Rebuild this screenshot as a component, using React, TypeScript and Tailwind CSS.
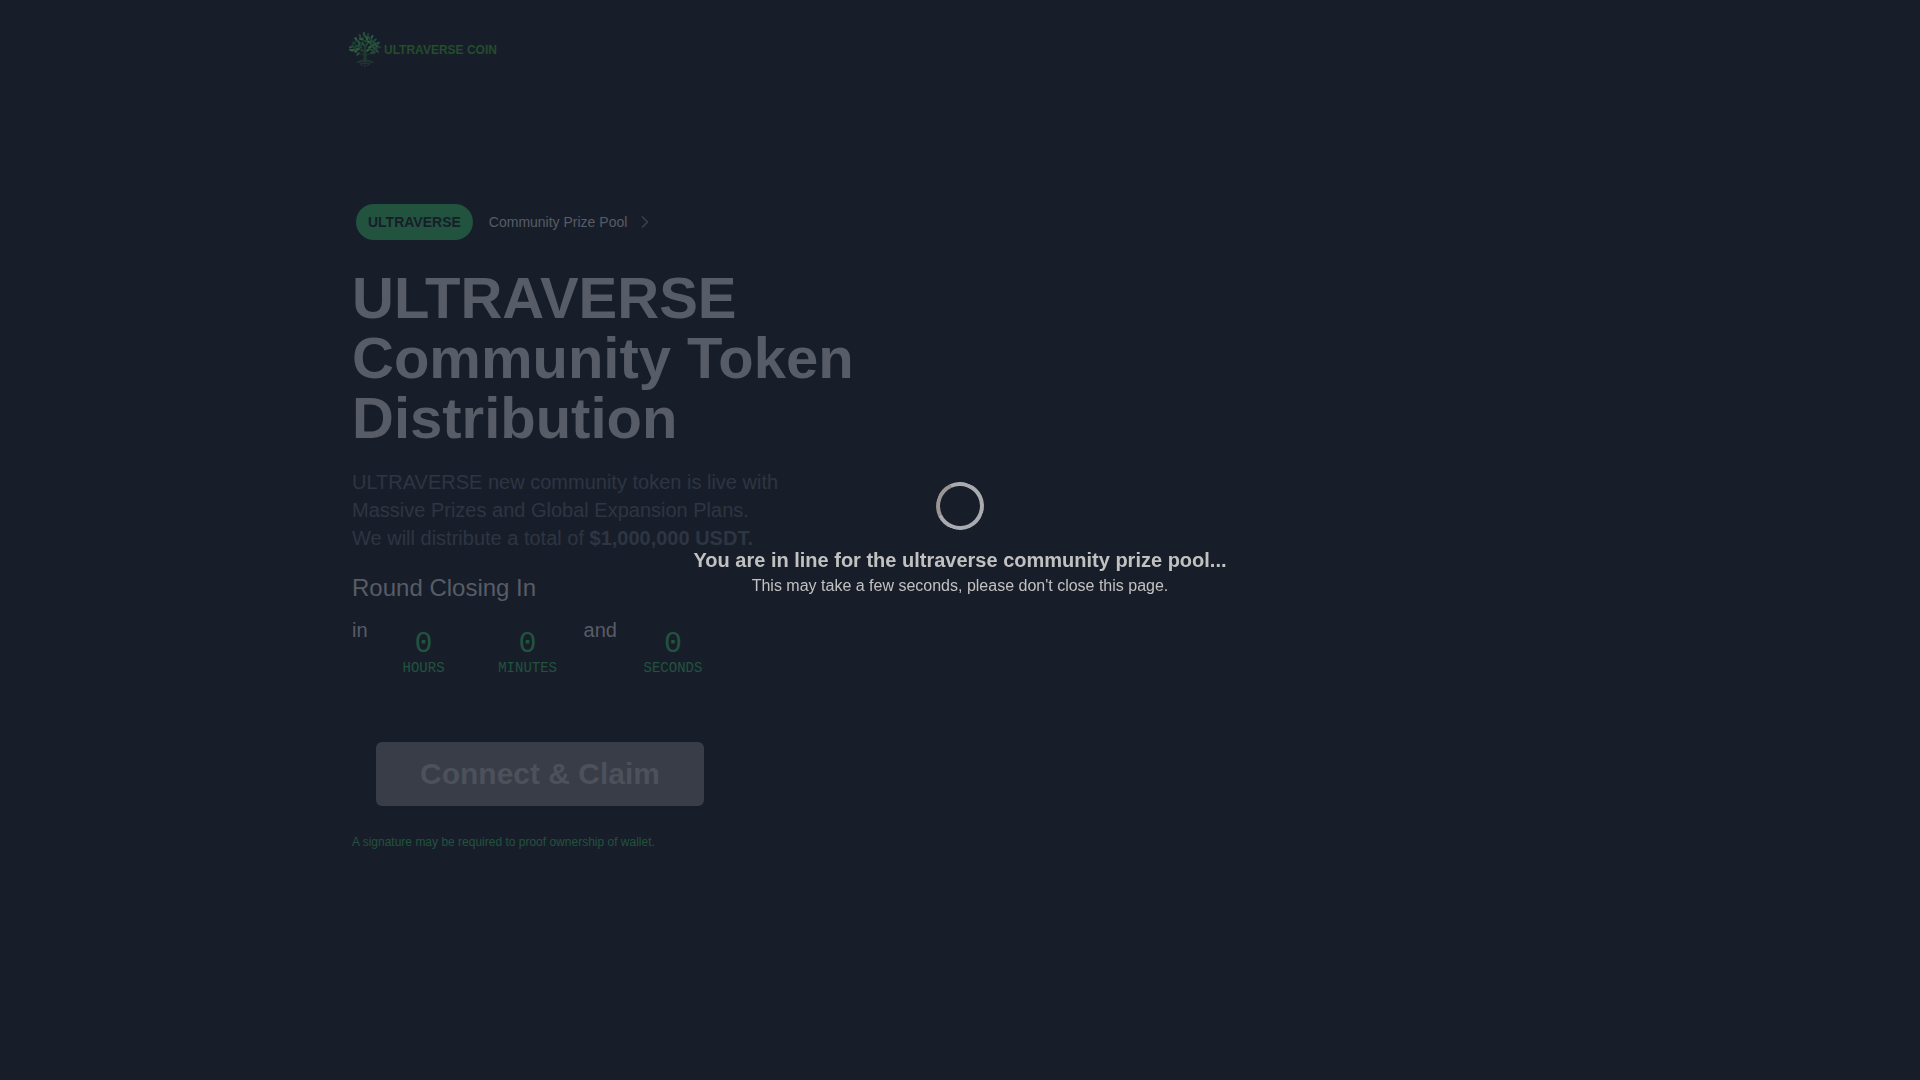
import { ChevronRight } from "lucide-react";

const sans = "font-['Liberation_Sans',Arial,sans-serif]";

const leafColors = ["#26513a", "#1f4032", "#2b5f3d", "#21483a"];

// [x, y, rotation] of each leaf in the logo's 34 x 36 canvas
const leaves: [number, number, number][] = [
  [3, 15, -10], [6, 11, 30], [8, 7, 50], [12, 4, 70], [16, 2, 90], [20, 3, 100],
  [24, 5, 120], [27, 8, 140], [30, 11, 160], [31, 15, 10], [5, 18, -30], [9, 14, 20],
  [11, 10, 45], [15, 7, 80], [19, 7, 95], [23, 9, 130], [25, 13, 150], [28, 16, 10],
  [8, 19, -30], [12, 15, 20], [15, 12, 60], [19, 12, 110], [22, 15, 150], [24, 18, 20],
  [10, 22, -40], [14, 18, 40], [20, 18, 140], [26, 20, 30], [29, 19, 40], [5, 14, 60],
  [13, 7, 10], [21, 6, 60], [27, 12, 80], [17, 9, 20], [3, 18, 20], [9, 9, 20],
  [11, 12, 80], [17, 14, 90], [21, 10, 30], [25, 10, 60], [29, 14, 120], [7, 16, 60],
  [10, 17, 0], [23, 12, 90], [26, 16, 60], [13, 13, 120], [18, 5, 40], [24, 21, 20],
];

function TreeLogo() {
  return (
    <svg className="h-9 w-[34px] shrink-0" viewBox="0 0 34 36" aria-hidden="true">
      <g fill="none" stroke="#20382f" strokeLinecap="round">
        <path d="M17 28V17" strokeWidth="3" />
        <path d="M17 21C14 19 11 18 8 15M17 20C20 18 23 17 27 13M17 18L14 9M17 18L21 8M16 23C13 22 10 22 7 19M18 23C21 22 24 22 27 19" strokeWidth="1" />
        <path d="M17 27C14 29 11 28 9 31M17 27C15 30 13 31 13 33M17 27V35M17 27C19 30 21 31 21 33M17 27C20 29 23 28 25 31M10 30C12 31 14 32 15 34M24 30C22 31 20 32 19 34M9 30C12 29 22 29 25 30M13 32C15 31 19 31 21 32" strokeWidth="1" />
      </g>
      {leaves.map(([x, y, r], i) => (
        <ellipse
          key={i}
          cx={x}
          cy={y}
          rx="2.2"
          ry="1.1"
          fill={leafColors[i % 4]}
          transform={`rotate(${r} ${x} ${y})`}
        />
      ))}
    </svg>
  );
}

function TimeUnit({ value, label }: { value: number; label: string }) {
  return (
    <div className="flex w-[104px] flex-col items-center pt-2.5 font-['Liberation_Mono',monospace] text-[#21533f]">
      <span className="text-3xl leading-9">{value}</span>
      <span className="text-sm leading-3">{label}</span>
    </div>
  );
}

export default function App() {
  return (
    <div className={`min-h-screen bg-[#181e29] text-[#575c67] ${sans}`}>
      <header className="mx-auto max-w-7xl px-7 pt-8">
        <a href="#" className="flex w-fit items-center gap-0.5 text-[#234d2c]">
          <TreeLogo />
          <span className="text-xs font-bold whitespace-nowrap">ULTRAVERSE COIN</span>
        </a>
      </header>

      <main className="mx-auto grid max-w-7xl px-8 pt-[136px] lg:grid-cols-2">
        <section>
          <a href="#" className="ml-1 flex w-fit items-center text-sm">
            <span className="rounded-full bg-[#21533f] px-3 py-2 font-bold text-[#181e29]">ULTRAVERSE</span>
            <span className="ml-4">Community Prize Pool</span>
            <ChevronRight className="ml-2 size-5 text-[#3a404c]" strokeWidth={2} aria-hidden="true" />
          </a>

          <h1 className="mt-7 text-[58px] leading-[60px] font-bold">
            ULTRAVERSE Community Token Distribution
          </h1>

          <p className="mt-5 max-w-[480px] text-xl leading-7 text-[#2e3543]">
            ULTRAVERSE new community token is live with Massive Prizes and Global Expansion Plans.
            <br />
            We will distribute a total of <strong>$1,000,000 USDT.</strong>
          </p>

          <h2 className="mt-5 text-2xl leading-8">Round Closing In</h2>

          <div className="mt-3 flex items-start text-xl leading-7">
            <span className="mr-1">in</span>
            <TimeUnit value={0} label="HOURS" />
            <TimeUnit value={0} label="MINUTES" />
            <span className="mx-1">and</span>
            <TimeUnit value={0} label="SECONDS" />
          </div>

          <button
            type="button"
            className="mt-[68px] ml-6 block h-16 w-full max-w-[328px] rounded-md bg-[#383d48] text-3xl font-bold text-[#4c515c]"
          >
            Connect &amp; Claim
          </button>

          <p className="mt-7 text-xs text-[#21533f]">
            A signature may be required to proof ownership of wallet.
          </p>
        </section>
      </main>

      <div role="status" className="fixed inset-0 flex flex-col items-center justify-center text-center text-[#c1c1c1]">
        <div className="mb-4 size-12 rotate-20 rounded-full border-4 border-[#a9abb0] border-l-[#989592]" />
        <p className="text-xl leading-7 font-bold">You are in line for the ultraverse community prize pool...</p>
        <p className="text-base leading-6">This may take a few seconds, please don't close this page.</p>
      </div>
    </div>
  );
}
